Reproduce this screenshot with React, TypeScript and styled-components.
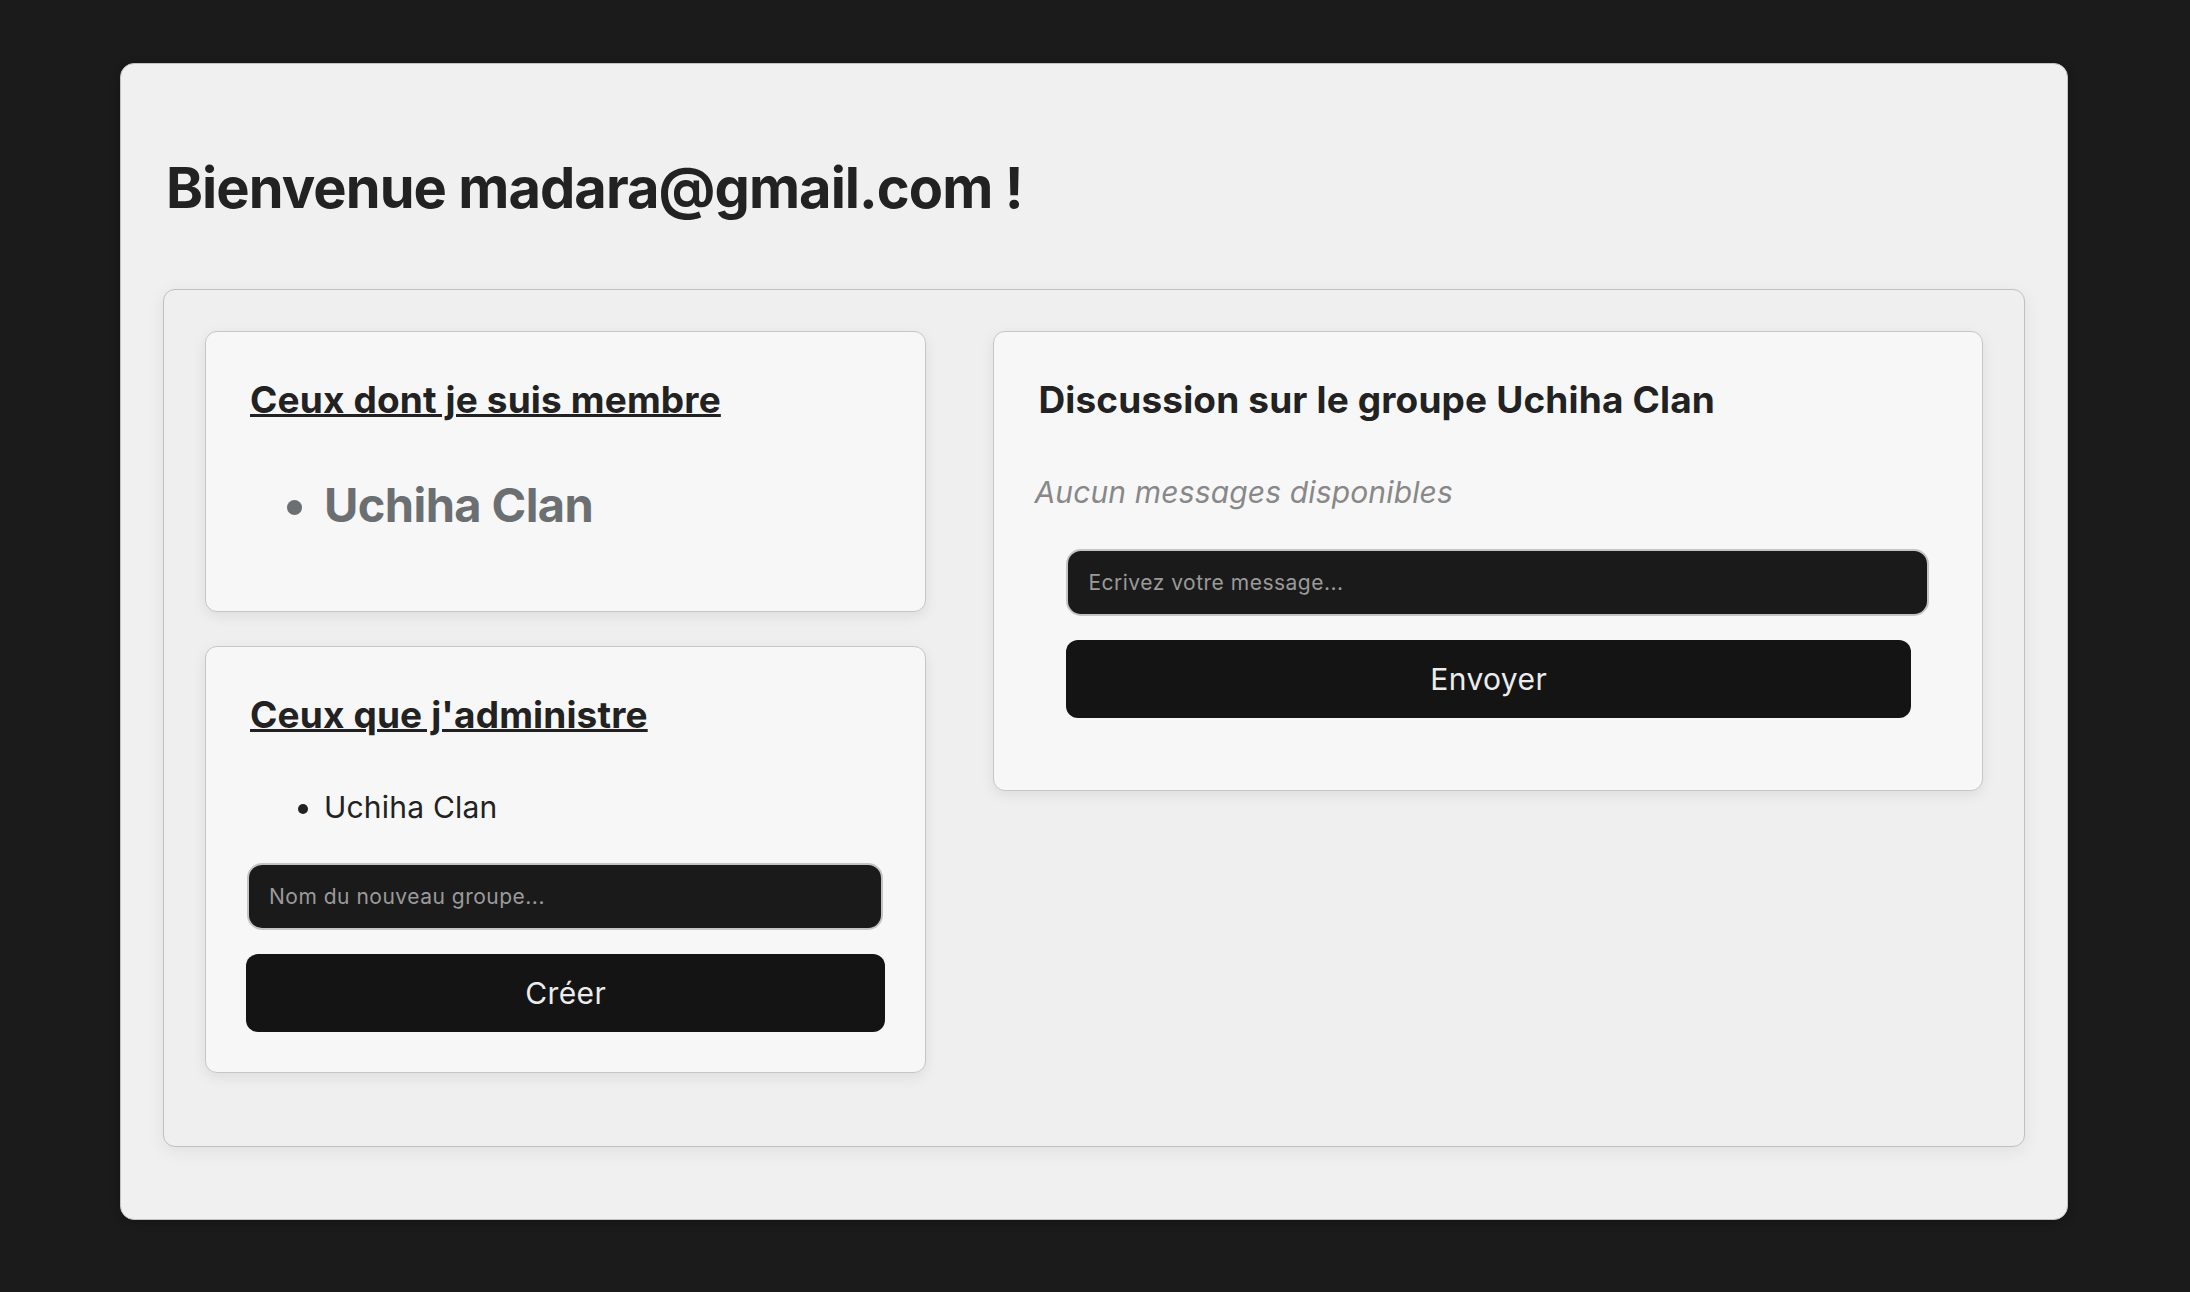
import React from "react";
import styled, { createGlobalStyle } from "styled-components";

const GlobalStyle = createGlobalStyle`
  html, body {
    margin: 0;
    padding: 0;
    background: #1b1b1b;
  }
  body {
    font-family: Inter, "Noto Sans", "Liberation Sans", sans-serif;
    color: #222;
  }
  * { box-sizing: border-box; }
`;

const Page = styled.main`
  padding: 63px 122px 73px 120px;
`;

const Shell = styled.section`
  background: #f0f0f0;
  border: 1px solid #c2c2c2;
  border-radius: 14px;
  padding: 42px 42px 72px;
  box-shadow: 0 2px 10px rgba(0, 0, 0, 0.25);
`;

const Title = styled.h1`
  margin: 49px 0 67px 3px;
  font-size: 56px;
  line-height: 1.2;
  font-weight: 700;
  letter-spacing: -0.95px;
  color: #222;
`;

const Board = styled.div`
  display: grid;
  grid-template-columns: 721fr 989fr;
  column-gap: 67px;
  align-items: start;
  background: #efefef;
  border: 1px solid #c0c0c0;
  border-radius: 12px;
  padding: 41px 41px 73px;
  box-shadow: 0 4px 18px rgba(0, 0, 0, 0.07);
`;

const Column = styled.div`
  display: flex;
  flex-direction: column;
  gap: 34px;
`;

const Card = styled.div`
  background: #f7f7f7;
  border: 1px solid #c6c6c6;
  border-radius: 12px;
  padding: 46px 44px 40px;
  box-shadow: 0 4px 14px rgba(0, 0, 0, 0.08);
`;

const CardTitle = styled.h2<{ $underline?: boolean }>`
  margin: 0 0 54px;
  font-size: 37px;
  line-height: 1.2;
  font-weight: 700;
  letter-spacing: 0.15px;
  color: #222;
  text-decoration: ${(p) => (p.$underline ? "underline" : "none")};
  text-decoration-thickness: 3px;
  text-underline-offset: 1px;
`;

const GroupList = styled.ul<{ $big?: boolean; $after?: number }>`
  margin: ${(p) => (p.$big ? 0 : -2)}px 0 ${(p) => p.$after ?? 0}px;
  padding-left: 74px;
  list-style: disc;
  font-size: ${(p) => (p.$big ? 47 : 30)}px;
  line-height: 1.2;
  font-weight: ${(p) => (p.$big ? 700 : 400)};
  letter-spacing: ${(p) => (p.$big ? -0.6 : 0.2)}px;
  color: ${(p) => (p.$big ? "#6b6f72" : "#222")};
`;

const GroupItem = styled.li``;

const EmptyNote = styled.p`
  margin: -3px 0 39px -4px;
  font-size: 30px;
  line-height: 1.2;
  font-style: italic;
  letter-spacing: 0.15px;
  color: #888;
`;

const Form = styled.form<{ $margin: string }>`
  display: flex;
  flex-direction: column;
  gap: 24px;
  margin: ${(p) => p.$margin};
`;

const Field = styled.input<{ $margin?: string }>`
  display: block;
  height: 67px;
  margin: ${(p) => p.$margin ?? "0"};
  padding: 0 20px;
  background: #1a1a1a;
  border: 2px solid #c4c4c4;
  border-radius: 15px;
  color: #e8e8e8;
  font-family: inherit;
  font-size: 21px;
  letter-spacing: 0.5px;
  outline: none;
  &::placeholder {
    color: #9a9a9a;
  }
`;

const Action = styled.button<{ $margin?: string }>`
  height: 78px;
  margin: ${(p) => p.$margin ?? "0"};
  background: #141414;
  border: none;
  border-radius: 12px;
  color: #ececec;
  font-family: inherit;
  font-size: 30px;
  font-weight: 400;
  letter-spacing: 0.4px;
  cursor: pointer;
`;

export default function App() {
  return (
    <>
      <GlobalStyle />
      <Page>
        <Shell>
          <Title>Bienvenue madara@gmail.com !</Title>
          <Board>
            <Column>
              <Card>
                <CardTitle $underline>Ceux dont je suis membre</CardTitle>
                <GroupList $big $after={38}>
                  <GroupItem>Uchiha Clan</GroupItem>
                </GroupList>
              </Card>
              <Card>
                <CardTitle $underline>Ceux que j'administre</CardTitle>
                <GroupList $after={38}>
                  <GroupItem>Uchiha Clan</GroupItem>
                </GroupList>
                <Form $margin="0 -4px" onSubmit={(e) => e.preventDefault()}>
                  <Field $margin="0 2px 0 1px" placeholder="Nom du nouveau groupe..." />
                  <Action type="submit">Créer</Action>
                </Form>
              </Card>
            </Column>
            <Column>
              <Card>
                <CardTitle>Discussion sur le groupe Uchiha Clan</CardTitle>
                <EmptyNote>Aucun messages disponibles</EmptyNote>
                <Form $margin="0 9px 32px 28px" onSubmit={(e) => e.preventDefault()}>
                  <Field placeholder="Ecrivez votre message..." />
                  <Action type="submit" $margin="0 18px 0 0">
                    Envoyer
                  </Action>
                </Form>
              </Card>
            </Column>
          </Board>
        </Shell>
      </Page>
    </>
  );
}
